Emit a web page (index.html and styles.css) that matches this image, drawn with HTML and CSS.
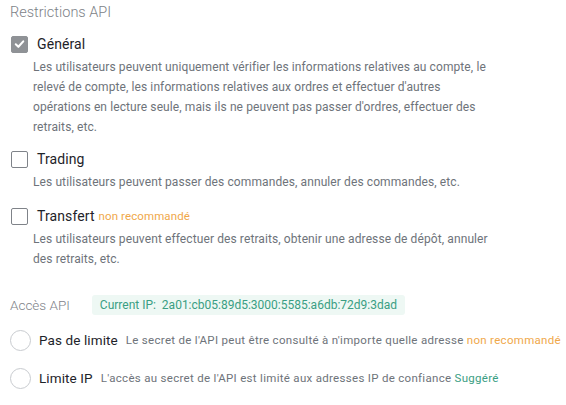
FILE: index.html
```html
<!DOCTYPE html>
<html lang="fr">
<head>
<meta charset="utf-8">
<link rel="stylesheet" href="styles.css">
</head>
<body>
<div class="page">
  <div class="section-title">Restrictions API</div>

  <div class="option">
    <div class="opt-head">
      <span class="checkbox checked">
        <svg viewBox="0 0 16 16" width="16" height="16"><path d="M4 8.3 L6.8 11 L12 5.2" fill="none" stroke="#fff" stroke-width="2.2" stroke-linecap="round" stroke-linejoin="round"/></svg>
      </span>
      <span class="opt-label">Général</span>
    </div>
    <p class="opt-desc">Les utilisateurs peuvent uniquement vérifier les informations relatives au compte, le relevé de compte, les informations relatives aux ordres et effectuer d'autres opérations en lecture seule, mais ils ne peuvent pas passer d'ordres, effectuer des retraits, etc.</p>
  </div>

  <div class="option">
    <div class="opt-head">
      <span class="checkbox"></span>
      <span class="opt-label">Trading</span>
    </div>
    <p class="opt-desc">Les utilisateurs peuvent passer des commandes, annuler des commandes, etc.</p>
  </div>

  <div class="option">
    <div class="opt-head">
      <span class="checkbox"></span>
      <span class="opt-label">Transfert</span>
      <span class="warn small">non recommandé</span>
    </div>
    <p class="opt-desc">Les utilisateurs peuvent effectuer des retraits, obtenir une adresse de dépôt, annuler des retraits, etc.</p>
  </div>

  <div class="access">
    <span class="section-title inline">Accès API</span>
    <span class="ip-chip">Current IP:&nbsp;&nbsp;2a01:cb05:89d5:3000:5585:a6db:72d9:3dad</span>
  </div>

  <div class="radio-row first">
    <span class="radio"></span>
    <span class="radio-label">Pas de limite</span>
    <span class="radio-desc">Le secret de l'API peut être consulté à n'importe quelle adresse <span class="warn">non recommandé</span></span>
  </div>
  <div class="radio-row">
    <span class="radio"></span>
    <span class="radio-label">Limite IP</span>
    <span class="radio-desc">L'accès au secret de l'API est limité aux adresses IP de confiance <span class="ok">Suggéré</span></span>
  </div>
</div>
</body>
</html>
```

FILE: styles.css
```css
* { box-sizing: border-box; }
html, body { margin: 0; padding: 0; background: #fff; }
body {
  font-family: Roboto, "Noto Sans", "Liberation Sans", sans-serif;
  color: #1e2329;
}
.page {
  padding: 4px 0 0 10px;
  width: 566px;
}
.section-title {
  font-size: 14.5px;
  line-height: 18px;
  color: #7d8288;
  font-weight: 300;
}
.option { margin-top: 13px; }
.option + .option { margin-top: 13px; }
.option + .option + .option { margin-top: 15px; }
.opt-head {
  display: flex;
  align-items: center;
  height: 18px;
}
.checkbox {
  width: 17px;
  height: 17px;
  border: 1px solid #7f8389;
  border-radius: 2px;
  margin-left: 1px;
  flex: none;
  display: flex;
  align-items: center;
  justify-content: center;
}
.checkbox.checked {
  background: #8f9296;
  border-color: #8f9296;
}
.checkbox svg { display: block; }
.opt-label {
  margin-left: 9px;
  font-size: 14px;
  letter-spacing: 0.1px;
  color: #1e2329;
}
.small { font-size: 11.5px; margin-left: 4px; letter-spacing: 0.1px; }
.warn { color: #f0a84a; }
.ok { color: #3a9e83; }
.opt-desc {
  margin: 4px 0 0 23px;
  width: 460px;
  font-size: 12px;
  letter-spacing: 0.1px;
  line-height: 20px;
  color: #6e737a;
}
.access {
  display: flex;
  align-items: center;
  margin-top: 25px;
  height: 22px;
}
.section-title.inline { font-size: 13.5px; }
.ip-chip {
  margin-left: 22px;
  background: #eef8f4;
  color: #3a9e83;
  font-size: 12px;
  padding: 3px 8px;
  border-radius: 3px;
  line-height: 14px;
}
.radio-row {
  display: flex;
  align-items: center;
  margin-top: 16px;
  height: 22px;
}
.radio-row.first { margin-top: 13px; }
.radio {
  width: 21px;
  height: 21px;
  border: 1px solid #c8cbcf;
  border-radius: 50%;
  flex: none;
}
.radio-label {
  margin-left: 8px;
  font-size: 13.5px;
  letter-spacing: 0.1px;
  color: #1e2329;
}
.radio-desc {
  margin-left: 8px;
  font-size: 11.5px;
  letter-spacing: 0.3px;
  color: #6e737a;
}
```
